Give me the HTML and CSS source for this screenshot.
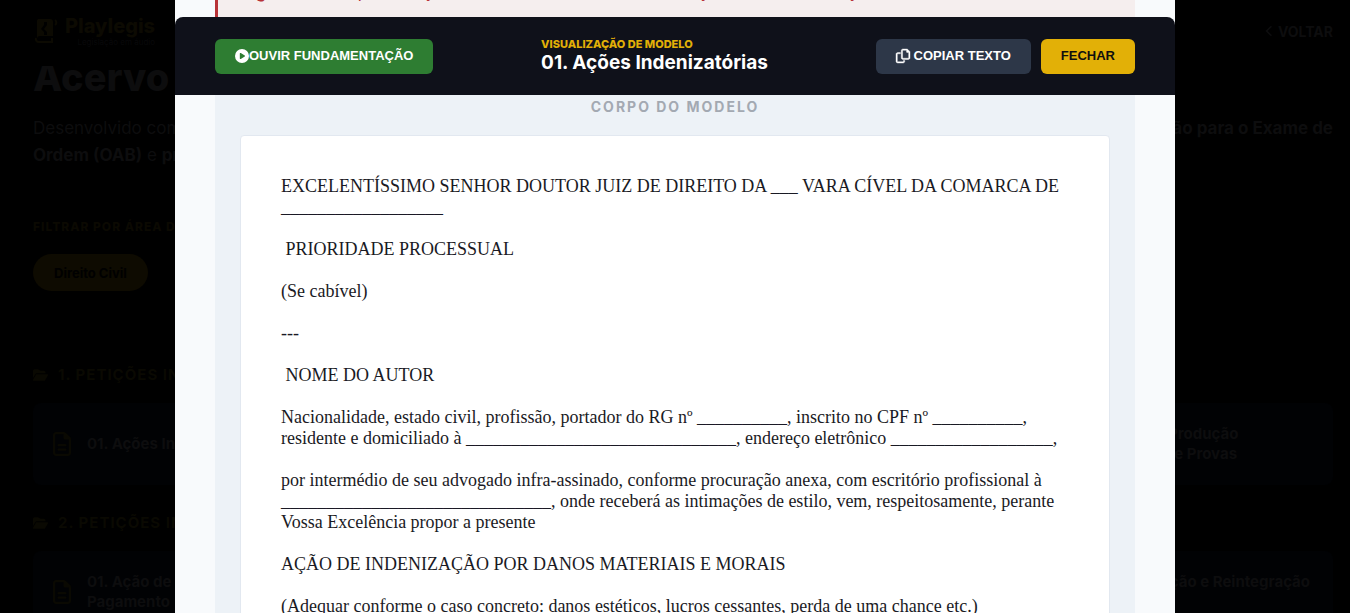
FILE: index.html
```html
<!DOCTYPE html>
<html lang="pt-BR">
<head>
<meta charset="utf-8">
<title>Playlegis</title>
<link rel="stylesheet" href="styles.css">
</head>
<body>
<svg class="sprite" aria-hidden="true">
  <symbol id="folder" viewBox="0 0 576 512"><path d="M88.700 223.800L0 375.800V96C0 60.700 28.700 32 64 32H181.500c17 0 33.300 6.700 45.300 18.700l26.500 26.500c12 12 28.300 18.700 45.300 18.700H416c35.300 0 64 28.700 64 64v32H144c-22.800 0-43.800 12.100-55.300 31.800zm27.600 16.100C122.100 230 132.600 224 144 224H544c11.500 0 22 6.100 27.700 16.100s5.700 22.200-.1 32.100l-112 192C453.900 474 443.400 480 432 480H32c-11.500 0-22-6.100-27.700-16.100s-5.700-22.200 .1-32.100l112-192z"/></symbol>
  <symbol id="file" viewBox="0 0 384 512"><path d="M64 464c-8.800 0-16-7.200-16-16V64c0-8.800 7.200-16 16-16H224v80c0 17.700 14.300 32 32 32h80V448c0 8.800-7.200 16-16 16H64zM64 0C28.700 0 0 28.700 0 64V448c0 35.300 28.700 64 64 64H320c35.300 0 64-28.700 64-64V154.500c0-17-6.700-33.300-18.700-45.300L274.700 18.700C262.700 6.700 246.500 0 229.500 0H64zm56 256c-13.300 0-24 10.700-24 24s10.700 24 24 24H264c13.300 0 24-10.700 24-24s-10.700-24-24-24H120zm0 96c-13.300 0-24 10.700-24 24s10.700 24 24 24H264c13.300 0 24-10.700 24-24s-10.700-24-24-24H120z"/></symbol>
</svg>

<div class="page">
  <nav class="nav">
    <a class="brand" href="#">
      <svg class="brand-mark" viewBox="0 0 28 28"><path fill-rule="evenodd" d="M5 2h12a3 3 0 0 1 3 3v14H7a3 3 0 0 0-3 3V5a3 3 0 0 1 1-3zM11 5v3l-3 4 3 3v3h3v-3l-3-3 3-4V5z"/><path d="M3 21a3 3 0 0 0 3 4h13v-4M22 3a3 3 0 0 1 0 5" fill="none" stroke="currentColor" stroke-width="2"/></svg>
      <span class="brand-text"><span class="brand-name">Playlegis</span><span class="brand-tag">Legislação em áudio</span></span>
    </a>
    <a class="back" href="#"><svg class="chevron" viewBox="0 0 10 14"><path d="M8 1L2 7l6 6" fill="none" stroke="currentColor" stroke-width="2"/></svg>VOLTAR</a>
  </nav>
  <main class="content">
    <h1 class="title">Acervo</h1>
    <p class="intro"><span>Desenvolvido com</span><strong>ção para o Exame de</strong></p>
    <p class="intro"><span><strong>Ordem (OAB)</strong> e <strong>prática</strong></span></p>
    <p class="filter-label">FILTRAR POR ÁREA DO</p>
    <button class="pill" type="button">Direito Civil</button>

    <h2 class="category"><svg class="folder"><use href="#folder"/></svg>1. PETIÇÕES INI</h2>
    <div class="cards">
      <a class="card" href="#"><svg class="file"><use href="#file"/></svg><span>01. Ações Indenizatórias</span></a>
      <a class="card card-last" href="#"><svg class="file"><use href="#file"/></svg><span>04. Ação de Produção<br>Antecipada de Provas</span></a>
    </div>
    <h2 class="category"><svg class="folder"><use href="#folder"/></svg>2. PETIÇÕES INI</h2>
    <div class="cards">
      <a class="card" href="#"><svg class="file"><use href="#file"/></svg><span>01. Ação de<br>Pagamento</span></a>
      <a class="card card-last" href="#"><svg class="file"><use href="#file"/></svg><span>04. Manutenção e Reintegração<br>de Posse</span></a>
    </div>
  </main>
</div>

<div class="overlay">
  <div class="modal" role="dialog" aria-labelledby="modal-title">
    <div class="warning-wrap"><div class="warning"><span>g</span><span>,</span><span>ç</span><span>ç</span><span>ç</span></div></div>
    <header class="toolbar">
      <button class="btn btn-listen" type="button"><svg class="icon-play" viewBox="0 0 512 512"><path fill="currentColor" fill-rule="evenodd" d="M0 256a256 256 0 1 1 512 0A256 256 0 1 1 0 256zM188 147c-8 4-12 12-12 21v176c0 9 5 17 12 21s17 4 25 0l144-88c7-4 11-12 11-21s-4-16-11-20l-144-88c-8-5-17-5-25-1z"/></svg>OUVIR FUNDAMENTAÇÃO</button>
      <div class="heading">
        <span class="eyebrow">VISUALIZAÇÃO DE MODELO</span>
        <h2 class="modal-title" id="modal-title">01. Ações Indenizatórias</h2>
      </div>
      <div class="actions">
        <button class="btn btn-copy" type="button"><svg class="icon-copy" viewBox="0 0 512 512"><path fill="currentColor" stroke="currentColor" stroke-width="14" d="M448 384H256c-35.300 0-64-28.700-64-64V64c0-35.300 28.700-64 64-64H396.100c12.700 0 24.900 5.100 33.900 14.100l67.900 67.900c9 9 14.100 21.200 14.100 33.900V320c0 35.300-28.700 64-64 64zM64 128h96v48H64c-8.800 0-16 7.200-16 16V448c0 8.800 7.200 16 16 16H256c8.800 0 16-7.200 16-16V416h48v32c0 35.300-28.700 64-64 64H64c-35.300 0-64-28.700-64-64V192c0-35.300 28.700-64 64-64zM448 336c8.800 0 16-7.200 16-16V128H400c-8.800 0-16-7.200-16-16V48H256c-8.800 0-16 7.200-16 16V320c0 8.800 7.200 16 16 16H448z" fill-rule="evenodd"/></svg>COPIAR TEXTO</button>
        <button class="btn btn-close" type="button">FECHAR</button>
      </div>
    </header>
    <section class="model">
      <h3 class="model-label">CORPO DO MODELO</h3>
      <article class="paper">EXCELENTÍSSIMO SENHOR DOUTOR JUIZ DE DIREITO DA ___ VARA CÍVEL DA COMARCA DE __________________

 PRIORIDADE PROCESSUAL

(Se cabível)

---

 NOME DO AUTOR

Nacionalidade, estado civil, profissão, portador do RG nº __________, inscrito no CPF nº __________, residente e domiciliado à ______________________________, endereço eletrônico __________________,

por intermédio de seu advogado infra-assinado, conforme procuração anexa, com escritório profissional à ______________________________, onde receberá as intimações de estilo, vem, respeitosamente, perante Vossa Excelência propor a presente

AÇÃO DE INDENIZAÇÃO POR DANOS MATERIAIS E MORAIS

(Adequar conforme o caso concreto: danos estéticos, lucros cessantes, perda de uma chance etc.)</article>
    </section>
  </div>
</div>
</body>
</html>
```

FILE: styles.css
```css
* { box-sizing: border-box; }
html, body { height: 100%; }
body {
  margin: 0;
  overflow: hidden;
  background: #000;
  font-family: Inter, "Liberation Sans", sans-serif;
}
h1, h2, h3, p { margin: 0; }
a { color: inherit; text-decoration: none; }
.sprite { display: none; }

/* dimmed page */
.page { height: 100vh; overflow: hidden; color: #0d0d0e; }
.nav {
  display: flex;
  align-items: center;
  justify-content: space-between;
  height: 66px;
  padding: 0 17px 4px 33px;
}
.brand { display: flex; align-items: center; gap: 4px; color: #0c0a02; }
.brand-mark { width: 28px; height: 28px; fill: currentColor; }
.brand-text { display: flex; flex-direction: column; align-items: flex-end; }
.brand-name { font-size: 20px; line-height: 22px; font-weight: 800; }
.brand-tag { font-size: 8px; line-height: 10px; color: #08080a; }
.back { display: flex; align-items: center; gap: 5px; font-size: 14px; font-weight: 700; }
.chevron { width: 8px; height: 12px; }
.content {
  display: flex;
  flex-direction: column;
  padding: 0 17px 0 33px;
  overflow: hidden;
}
.title { margin: -13px 0 14px; font-size: 38px; line-height: 48px; font-weight: 800; }
.intro { display: flex; justify-content: space-between; font-size: 17px; line-height: 27px; }
.intro span { white-space: pre; }
.filter-label { margin-top: 49px; font-size: 12px; line-height: 18px; font-weight: 800; letter-spacing: 1px; color: #0b0902; }
.pill {
  align-self: flex-start;
  height: 37px;
  margin-top: 18px;
  padding: 0 21px;
  border: 0;
  border-radius: 19px;
  background: #0e0b01;
  color: #000;
  font: 700 13px/16px Inter, sans-serif;
}
.category {
  display: flex;
  align-items: center;
  gap: 10px;
  margin: 74px 0 18px;
  font-size: 15px;
  line-height: 20px;
  letter-spacing: 1px;
  color: #0a0902;
}
.folder { width: 15px; height: 14px; fill: currentColor; }
.cards { display: grid; grid-template-columns: repeat(4, 1fr); gap: 20px; }
.cards + .category { margin-top: 28px; }
.card {
  display: flex;
  align-items: center;
  gap: 16px;
  height: 82px;
  padding: 0 20px;
  border-radius: 8px;
  background: #010204;
  font-size: 15px;
  line-height: 20px;
  font-weight: 700;
  white-space: nowrap;
}
.card-last { grid-column: 4; }
.file { width: 18px; height: 24px; fill: #0a0902; }

/* modal */
.overlay { position: fixed; inset: 0; display: flex; justify-content: center; }
.modal {
  display: flex;
  flex-direction: column;
  width: 100%;
  max-width: 1000px;
  overflow: hidden;
  background: #f8fafc;
}
.warning-wrap {
  display: flex;
  flex: none;
  flex-direction: column;
  justify-content: flex-end;
  height: 17px;
  padding: 0 40px;
  overflow: hidden;
}
.warning {
  display: grid;
  flex: none;
  grid-template-columns: 102px 65px 275px 149px 1fr;
  padding: 20px 0 15px 38px;
  border-left: 3px solid #b83338;
  background: #f5eeee;
  color: #b83338;
  font-size: 16px;
  font-weight: 600;
  line-height: 20px;
}
.toolbar {
  flex: none;
  display: flex;
  align-items: center;
  justify-content: space-between;
  padding: 20px 40px;
  border-radius: 8px 8px 0 0;
  background: #0f111a;
}
.btn {
  display: inline-flex;
  align-items: center;
  height: 35px;
  padding: 0 20px;
  border: 0;
  border-radius: 6px;
  font: bold 13px/16px "Liberation Sans", Arial, sans-serif;
  color: #fff;
  white-space: nowrap;
}
.btn-listen { background: #2e7d32; }
.btn-copy { gap: 4px; background: #2d3748; }
.btn-close { background: #e2b007; color: #0f0f0f; }
.icon-play, .icon-copy { width: 14px; height: 14px; overflow: visible; }
.heading { display: flex; flex-direction: column; }
.eyebrow { font-size: 11px; line-height: 14px; font-weight: 800; color: #e2b007; }
.modal-title { font-size: 19px; line-height: 24px; font-weight: 700; color: #fff; }
.actions { display: flex; gap: 10px; }
.model {
  flex: none;
  margin: 0 40px;
  padding: 4px 25px 40px;
  background: #edf2f7;
}
.model-label {
  margin-bottom: 20px;
  font-size: 14px;
  line-height: 16px;
  font-weight: 700;
  letter-spacing: 2px;
  text-align: center;
  color: #a3a9b2;
}
.paper {
  padding: 40px;
  border: 1px solid #e2e8f0;
  border-radius: 4px;
  background: #fff;
  color: #1a1a24;
  font: 18px/21px "Liberation Serif", "Times New Roman", serif;
  white-space: pre-wrap;
}
```
